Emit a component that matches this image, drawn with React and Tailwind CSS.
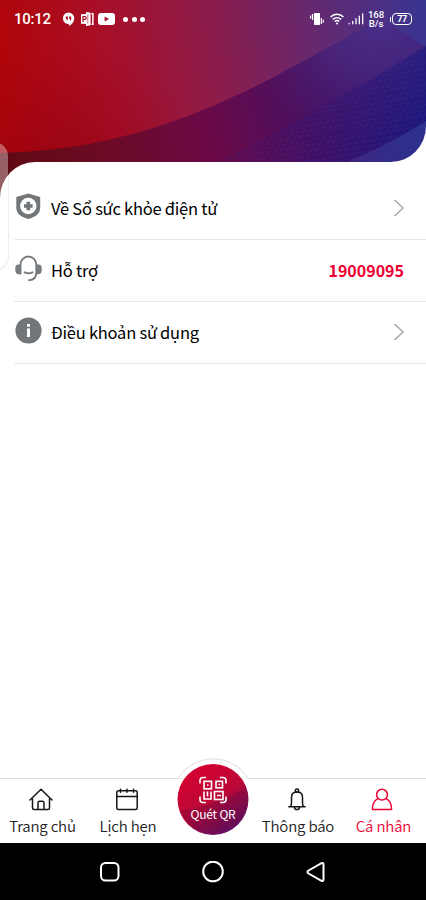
import React from "react";

const dots = [];
for (let r = 0; r < 28; r++) {
  for (let c = 0; c < 34; c++) {
    dots.push([222 + c * 6.5 + (r % 2) * 3.2, 76 + r * 5.2 - c * 1.1]);
  }
}

function HeaderArt() {
  return (
    <svg className="absolute inset-0 h-full w-full" viewBox="0 0 426 200" preserveAspectRatio="none">
      <defs>
        <linearGradient id="sky" gradientUnits="userSpaceOnUse" x1="0" y1="60" x2="426" y2="0">
          <stop offset="0" stopColor="#b00509" />
          <stop offset="0.25" stopColor="#a80f28" />
          <stop offset="0.5" stopColor="#8b1d4c" />
          <stop offset="0.75" stopColor="#632a72" />
          <stop offset="1" stopColor="#383592" />
        </linearGradient>
        <linearGradient id="deep" gradientUnits="userSpaceOnUse" x1="0" y1="190" x2="426" y2="90">
          <stop offset="0" stopColor="#5f0a12" />
          <stop offset="0.26" stopColor="#6c0a25" />
          <stop offset="0.5" stopColor="#6b0a48" />
          <stop offset="0.73" stopColor="#461063" />
          <stop offset="0.92" stopColor="#20147a" />
          <stop offset="1" stopColor="#171a80" />
        </linearGradient>
        <radialGradient id="lift" gradientUnits="userSpaceOnUse" cx="375" cy="15" r="140">
          <stop offset="0" stopColor="#4a308a" stopOpacity="1" />
          <stop offset="0.4" stopColor="#50297d" stopOpacity="0.75" />
          <stop offset="1" stopColor="#5a1c60" stopOpacity="0" />
        </radialGradient>
        <radialGradient id="shade" gradientUnits="userSpaceOnUse" cx="60" cy="190" r="150">
          <stop offset="0" stopColor="#85000f" stopOpacity="0.6" />
          <stop offset="1" stopColor="#900018" stopOpacity="0" />
        </radialGradient>
        <linearGradient id="navy" gradientUnits="userSpaceOnUse" x1="218" y1="0" x2="426" y2="0">
          <stop offset="0" stopColor="#500a55" stopOpacity="0.2" />
          <stop offset="1" stopColor="#171880" stopOpacity="0.6" />
        </linearGradient>
        <linearGradient id="corner" x1="0" y1="0" x2="1" y2="0">
          <stop offset="0" stopColor="#442379" />
          <stop offset="0.5" stopColor="#322b87" />
          <stop offset="1" stopColor="#2c318f" />
        </linearGradient>
        <clipPath id="mesh"><path d="M218 162Q320 112 426 46V200H218Z" /></clipPath>
      </defs>
      <path fill="url(#sky)" d="M0 0H426V200H0Z" />
      <path fill="url(#shade)" d="M0 0H300V200H0Z" />
      <path fill="url(#deep)" d="M0 153C105 151 190 120 270 79C310 58 345 38 370 26L392 26L426 47V200H0Z" />
      <path fill="url(#lift)" d="M0 153C105 151 190 120 270 79C310 58 345 38 370 26L392 26L426 47V200H0Z" />
      <path fill="url(#navy)" d="M218 162Q320 112 426 46V200H218Z" />
      <path fill="url(#corner)" d="M340 165Q387 146 426 121V170Z" />
      <g clipPath="url(#mesh)" fill="none" stroke="#51399a" strokeOpacity="0.38" strokeWidth="0.9">
        {dots.map(([x, y], i) => (
          <path key={i} d={`M${x} ${y + 3}v-2l2-1h2`} />
        ))}
      </g>
    </svg>
  );
}

function StatusBar() {
  return (
    <div className="relative flex h-[38px] items-center pl-[14px] pr-[14px] text-white">
      <span className="w-[37px] whitespace-nowrap font-[Roboto] text-[15px] font-medium leading-none tracking-[-0.25px]">10:12</span>
      <svg className="ml-[11px] h-[15px] w-[13px]" viewBox="0 0 13 15" fill="white">
        <path d="M6.5 .5a5.8 5.8 0 0 1 5.8 5.8c0 3.6-2.5 6.2-5.4 7.8v-2A5.8 5.8 0 1 1 6.5 .5Z" />
        <path d="M3.8 4.5h2.1v3L4.7 8.7V6.8h-.9Zm3.3 0h2.1v3L8 8.7V6.8h-.9Z" fill="#a80b22" />
      </svg>
      <svg className="ml-[6px] h-[14px] w-[13px]" viewBox="0 0 13 14">
        <path fill="white" d="M0 2.2 5 2V0L9.600 .8V13.2L5 14v-2L0 11.7Z" />
        <path d="M2 10V4.5h1.800a1.400 1.400 0 0 1 0 2.800H2" fill="none" stroke="#aa0c25" strokeWidth="1.2" />
        <path d="M10.400 1.700h1.500v10.600h-1.500" fill="none" stroke="white" strokeWidth="1.5" />
        <path d="M6.800 2.500v9" stroke="#aa0c25" strokeWidth=".6" />
      </svg>
      <svg className="ml-[4px] h-[12px] w-[17px]" viewBox="0 0 17 12">
        <rect width="17" height="12" rx="3" fill="white" />
        <path d="m6.6 3.6 4.4 2.4-4.4 2.4Z" fill="#a80f2b" />
      </svg>
      <div className="ml-[8px] flex gap-[3.500px]">
        <i className="size-[5px] rounded-full bg-white" />
        <i className="size-[5px] rounded-full bg-white" />
        <i className="size-[5px] rounded-full bg-white" />
      </div>
      <svg className="ml-auto h-[14px] w-[14px]" viewBox="0 0 14 14" fill="none" stroke="white" strokeWidth="1.2">
        <rect x="4" y="1" width="6" height="12" rx=".7" fill="white" stroke="none" />
        <path d="M.6 3.5v3M2.6 2v6M11.3 6v6M13.2 7.700v3" />
      </svg>
      <svg className="ml-[6px] h-[12px] w-[14px]" viewBox="0 0 14 12" fill="none" stroke="white" strokeWidth="1.500">
        <path d="M.5 4C4.2.2 9.8.2 13.5 4M2.8 6.4c2.4-2.3 6-2.3 8.4 0M4.8 8.6c1.3-1.2 3.1-1.2 4.4 0" />
        <circle cx="7" cy="10.5" r="1" fill="white" stroke="none" />
      </svg>
      <svg className="ml-[4px] h-[12px] w-[16px]" viewBox="0 0 16 12" stroke="white" strokeWidth="1.3" strokeLinecap="round">
        <path d="M1.2 10.4v.4M4.7 8.3v2.5M8 5.7v5.1M11.3 3.2v7.6M14.7 1v9.8" />
      </svg>
      <div className="ml-[4px] mr-[3px] w-[17px] whitespace-nowrap text-center font-[Roboto] text-[9.6px] font-medium leading-[9.5px] tracking-[-0.1px]">168<br />B/s</div>
      <i className="ml-[2px] h-[5px] w-[1.5px] bg-white" />
      <div className="ml-[1px] flex h-[12px] w-[20px] items-center justify-center rounded-[4px] border-[1.3px] border-white font-[Roboto] text-[9px] font-bold leading-none tracking-[-0.3px]">77</div>
    </div>
  );
}

const Shield = () => (
  <svg className="h-[27px] w-[27px]" viewBox="0 0 27 27">
    <path fill="#727679" d="M13.3.6 25.2 4v10.5c0 6.2-5 9.8-11.9 11.5C6.300 24.300 1.300 20.700 1.300 14.500V4Z" />
    <circle cx="13.300" cy="13" r="8.200" fill="white" />
    <path d="M13.300 8.700v8.600M9 13h8.600" stroke="#727679" strokeWidth="3.700" />
  </svg>
);

const Headset = () => (
  <svg className="h-[28px] w-[27px]" viewBox="0 0 27 28" fill="none" stroke="#777b7e" strokeWidth="1.900">
    <path d="M5.500 18.500V9.500a7.900 8 0 0 1 15.800 0v8c0 4.700-3 7.500-7.200 7.800M9.600 17.300q3.900 2 7.900 0" strokeLinecap="round" />
    <path d="M5.500 9.500v9.700H3.300Q.3 18.800.3 15.300v-2.600Q.3 9.800 3.300 9.500ZM21.300 9.500h2.400q3 .3 3 3.200v2.600q0 3.500-3 3.900h-2.400Z" fill="#777b7e" stroke="none" />
  </svg>
);

const Info = () => (
  <svg className="h-[27px] w-[27px]" viewBox="0 0 27 27">
    <circle cx="13.500" cy="13.500" r="13.100" fill="#727679" />
    <rect x="12" y="7" width="3" height="2.700" fill="white" />
    <rect x="12" y="11.500" width="3" height="8.500" fill="white" />
  </svg>
);

const Chevron = () => (
  <svg className="mb-px mr-[21px] h-[18px] w-[12px]" viewBox="0 0 12 18" fill="none" stroke="#a8a8a8" strokeWidth="1.500">
    <path d="m1.500 1 8.500 8-8.500 8" />
  </svg>
);

function Row({ icon, label, children }) {
  return (
    <div className="ml-[14px] flex h-[62px] items-center border-b border-[#e9e9e9] pl-px">
      <div className="mb-[4px] w-[27px]">{icon}</div>
      <span className="mb-[2px] ml-[9px] flex-1 whitespace-nowrap text-[16.5px] leading-[24px] tracking-[-0.24px] text-black">{label}</span>
      {children}
    </div>
  );
}

const line = { fill: "none", strokeWidth: 1.5, strokeLinejoin: "round", strokeLinecap: "round" };

const Home = () => (
  <svg className="size-[24px]" viewBox="0 0 24 24" stroke="#161616" {...line}>
    <path d="M1 12 12 1.300 23 12M3.500 10.500V20q0 1.500 1.500 1.500h14q1.500 0 1.500-1.500V10.500M9 21.500V15q0-1.700 1.700-1.700h2.600Q15 13.300 15 15v6.500" />
  </svg>
);
const Calendar = () => (
  <svg className="size-[24px]" viewBox="0 0 24 24" stroke="#161616" {...line}>
    <rect x="1.800" y="2.800" width="20.400" height="18.700" rx="1.500" />
    <path d="M1.800 8.500h20.400M5.500 1.300v3M12 1.300v3M18.500 1.300v3" />
  </svg>
);
const Bell = () => (
  <svg className="size-[24px]" viewBox="0 0 24 24" stroke="#161616" {...line}>
    <path d="M3.800 18.800H20.200M5.500 18.500Q6.500 17 6.500 15V9q0-5 5.500-5t5.500 5v6q0 2 1 3.500M9.500 19.200q0 2.400 2.500 2.400t2.500-2.400" />
    <circle cx="12" cy="2.600" r="1.700" />
  </svg>
);
const Person = () => (
  <svg className="size-[24px]" viewBox="0 0 24 24" stroke="#ee0033" {...line}>
    <circle cx="12" cy="6.700" r="5.400" />
    <path d="M8 10.600Q2.400 13 2.400 21.500H21.600Q21.600 13 16 10.600" />
  </svg>
);

function Tab({ icon, label, active }) {
  return (
    <div className={"flex w-[85px] shrink-0 flex-col items-center pt-[9px] " + (active ? "text-[#ee0033]" : "text-[#222]")}>
      <div className="-ml-[3px]">{icon}</div>
      <span className="mt-[3px] whitespace-nowrap text-[15px] font-[350] leading-[22px] tracking-[-0.2px]">{label}</span>
    </div>
  );
}

function ScanButton() {
  return (
    <div className="relative z-10 -mt-[22px] h-[84px] w-[84px]">
      <svg className="absolute inset-0" width="84" height="84" viewBox="0 0 84 84">
        <defs>
          <linearGradient id="scan" x1="0.2" y1="0" x2="0.850" y2="1">
            <stop offset="0" stopColor="#d7002f" />
            <stop offset="0.500" stopColor="#bb0837" />
            <stop offset="0.700" stopColor="#8d0b4a" />
            <stop offset="1" stopColor="#501070" />
          </linearGradient>
        </defs>
        <path d="M7 21.500A41 41 0 0 1 77 21.500" fill="white" stroke="#dedede" />
        <circle cx="42" cy="42.500" r="35.500" fill="url(#scan)" />
        <path d="M8.500 53.500Q44 49 75.500 30.500A35.500 35.500 0 0 1 8.500 53.500Z" fill="#670940" fillOpacity=".3" />
        <g fill="none" stroke="white" strokeWidth="1.600" transform="translate(0 .5)">
          <path d="M29 26v-3q0-3 3-3h3M49 20h3q3 0 3 3v3M29 39v3q0 3 3 3h3M49 45h3q3 0 3-3v-3" />
          <rect x="33" y="23.800" width="7.500" height="7.500" />
          <rect x="45" y="23.800" width="6.500" height="6.500" />
          <rect x="43.500" y="34" width="8.500" height="8" />
          <path d="M36 27.500h1.500M47.500 27h1.500M33 34v7.500h7V34M36.500 34v5M46 38h4" />
        </g>
      </svg>
      <span className="absolute left-0 top-[48px] w-full whitespace-nowrap text-center text-[12px] leading-[18px] tracking-[-0.2px] text-white">Quét QR</span>
    </div>
  );
}

export default function App() {
  return (
    <div className="relative flex h-[900px] w-[426px] flex-col overflow-hidden bg-white font-['Noto_Sans_CJK_SC','Noto_Sans',sans-serif]">
      <header className="relative h-[162px] shrink-0">
        <div className="absolute inset-x-0 top-0 h-[200px] overflow-hidden">
          <HeaderArt />
          <svg className="absolute inset-0" width="426" height="200" viewBox="0 0 426 200">
            <path fill="white" d="M0 200V198A35 36 0 0 1 35 162H391A35 36 0 0 0 426 126V200Z" />
          </svg>
        </div>
        <StatusBar />
      </header>
      <main className="relative flex-1 pt-[16px]">
        <Row icon={<Shield />} label="Về Sổ sức khỏe điện tử"><Chevron /></Row>
        <Row icon={<Headset />} label="Hỗ trợ">
          <span className="mb-[2px] mr-[22px] text-[16px] font-bold leading-[24px] text-[#ee0033]">19009095</span>
        </Row>
        <Row icon={<Info />} label="Điều khoản sử dụng"><Chevron /></Row>
      </main>
      <nav className="flex h-[65px] shrink-0 justify-between border-t border-[#dedede] bg-white">
        <Tab icon={<Home />} label="Trang chủ" />
        <Tab icon={<Calendar />} label="Lịch hẹn" />
        <ScanButton />
        <Tab icon={<Bell />} label="Thông báo" />
        <Tab icon={<Person />} label="Cá nhân" active />
      </nav>
      <footer className="flex h-[57px] shrink-0 items-center justify-between bg-black px-[99px]">
        <svg className="size-[22px]" viewBox="0 0 22 22"><rect x="2" y="2" width="17.500" height="17.500" rx="4.500" fill="none" stroke="white" strokeWidth="2" /></svg>
        <svg className="size-[22px]" viewBox="0 0 22 22"><circle cx="11" cy="10.500" r="9.800" fill="none" stroke="white" strokeWidth="2" /></svg>
        <svg className="size-[22px]" viewBox="0 0 22 22"><path d="M3.500 9.500 16.500 2.200q2-.8 2 1.300v15q0 2.100-2 1.300L3.500 12.500q-2-1.500 0-3Z" fill="none" stroke="white" strokeWidth="2" /></svg>
      </footer>
      <div className="absolute -left-[22px] top-[142px] h-[128px] w-[30px] rounded-r-[14px] bg-white/35 shadow-[0_0_2px_rgba(0,0,0,0.25)]" />
    </div>
  );
}
